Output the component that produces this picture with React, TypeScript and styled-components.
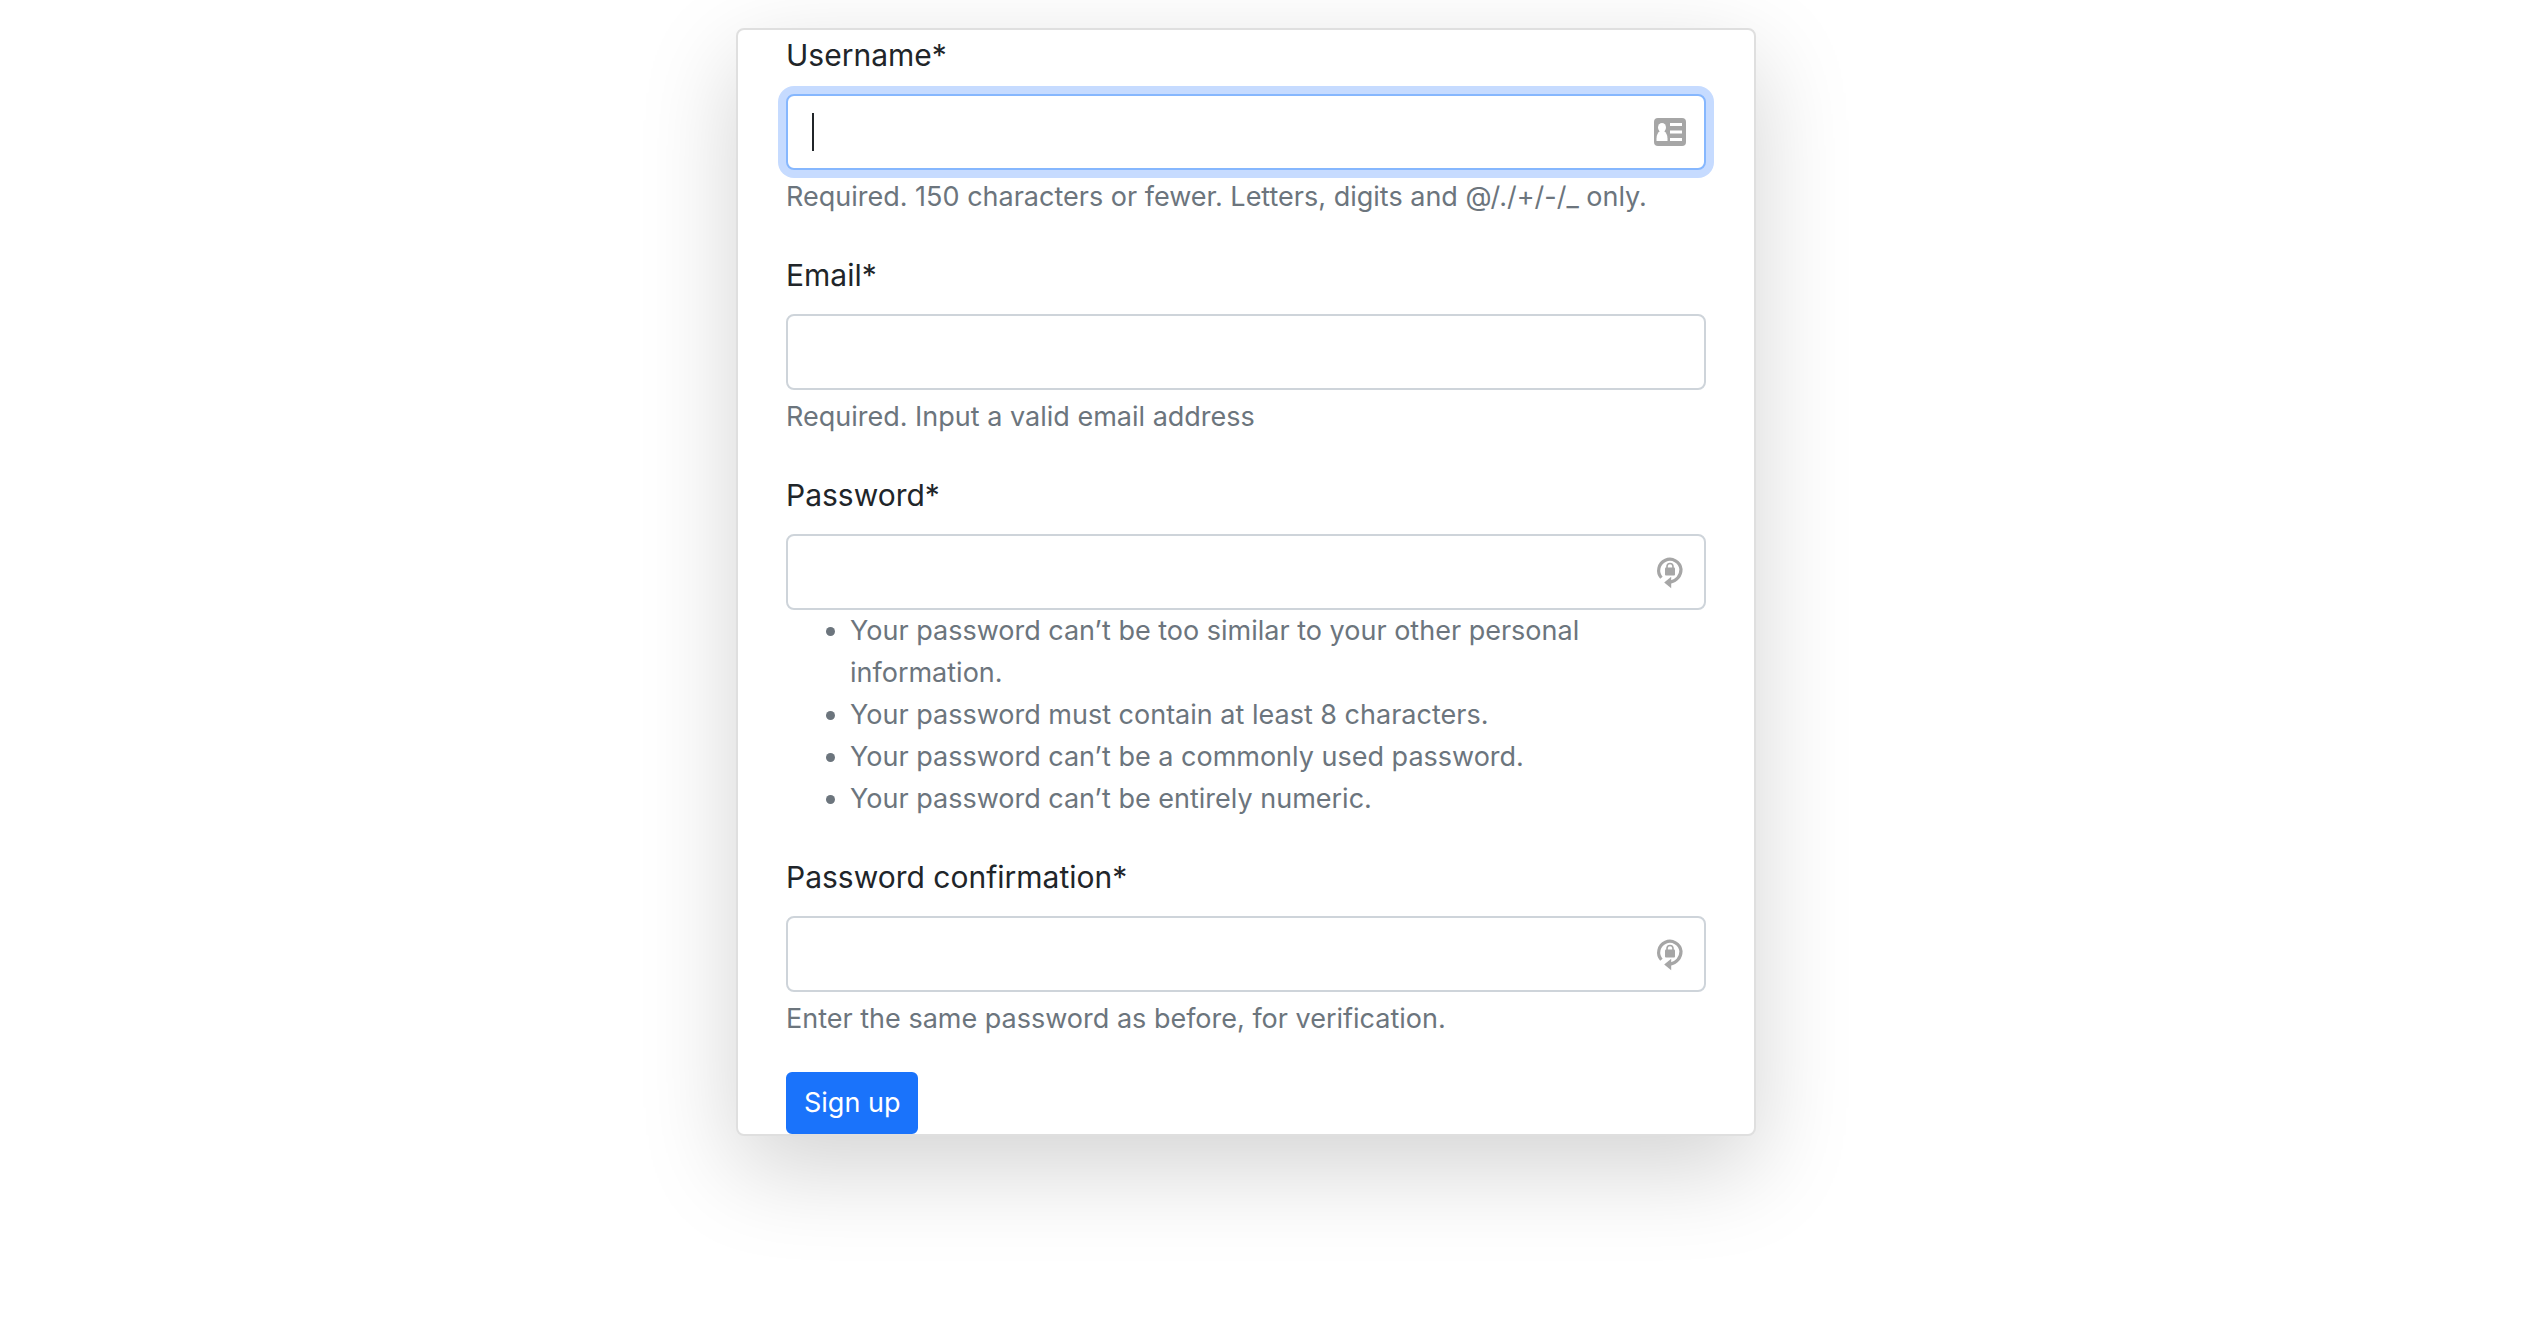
import React from "react";
import styled, { createGlobalStyle, css } from "styled-components";

const GlobalStyle = createGlobalStyle`
  *, *::before, *::after { box-sizing: border-box; }
  body {
    margin: 0;
    background: #fff;
    color: #212529;
    font-family: Inter, "Liberation Sans", sans-serif;
    font-size: 30px;
    line-height: 50px;
  }
`;

const Page = styled.main`
  display: flex;
  justify-content: center;
  padding: 28px 46px 160px 0;
`;

const Card = styled.form`
  width: 100%;
  max-width: 1020px;
  padding: 0 48px;
  background: #fff;
  border: 2px solid #dfdfdf;
  border-radius: 8px;
  box-shadow: 0 32px 96px rgba(0, 0, 0, 0.175);
`;

const Group = styled.div`
  display: flex;
  flex-direction: column;
  margin-bottom: 32px;
`;

const Label = styled.label`
  align-self: flex-start;
  margin-bottom: 14px;
`;

const Control = styled.div`
  position: relative;
  display: flex;
`;

const Input = styled.input<{ $active?: boolean }>`
  width: 100%;
  height: 76px;
  padding: 12px 80px 12px 24px;
  border: 2px solid #ced4da;
  border-radius: 8px;
  background: #fff;
  color: inherit;
  font: inherit;
  outline: none;
  caret-color: transparent;
  ${(p) =>
    p.$active &&
    css`
      border-color: #86b7fe;
      box-shadow: 0 0 0 8px #c6dbff;
    `}
`;

const Caret = styled.span`
  position: absolute;
  left: 26px;
  top: 19px;
  width: 2px;
  height: 38px;
  background: #212529;
`;

const Adornment = styled.span`
  position: absolute;
  right: 20px;
  top: 0;
  bottom: 0;
  display: flex;
  align-items: center;
  color: #a6a6a6;

  svg {
    display: block;
  }
`;

const Help = styled.small`
  margin: 8px 0 2px;
  color: #6c757d;
  font-size: 27px;
  line-height: 38px;
`;

const Rules = styled.ul`
  margin: 0;
  padding-left: 64px;
  color: #6c757d;
  font-size: 27px;
  line-height: 42px;
`;

const SubmitButton = styled.button`
  display: block;
  padding: 8px 16px;
  border: 2px solid #1a73fb;
  border-radius: 6px;
  background: #1a73fb;
  color: #fff;
  font-family: inherit;
  font-size: 27px;
  line-height: 42px;
`;

const IdCardIcon = () => (
  <svg width="32" height="28" viewBox="0 0 32 28" aria-hidden="true">
    <rect width="32" height="28" rx="4" fill="currentColor" />
    <ellipse cx="8" cy="9.5" rx="4" ry="4.5" fill="#fff" />
    <path d="M2.500 23V20.500c0-3.500 1.500-6 3.500-7.500h4c2 1.500 3.500 4 3.500 7.500V23z" fill="#fff" />
    <path d="M16 5h12v3H16zM16 12.500h12v3H16zM16 20h12v3H16z" fill="#fff" />
  </svg>
);

const LockCycleIcon = () => (
  <svg width="32" height="34" viewBox="0 0 32 34" aria-hidden="true">
    <path
      d="M7.400 22.800A11.200 11.200 0 1 1 27 14.200C27 21 22.500 26 16 27.300"
      fill="none"
      stroke="currentColor"
      strokeWidth="3.200"
    />
    <path d="M10.200 27.500L17.200 21.800V33.300z" fill="currentColor" />
    <rect x="11" y="12.500" width="10" height="8" rx="1" fill="currentColor" />
    <path
      d="M13 13V11.500a3 3 0 0 1 6 0V13"
      fill="none"
      stroke="currentColor"
      strokeWidth="1.600"
    />
  </svg>
);

type FieldProps = {
  id: string;
  label: string;
  type: string;
  active?: boolean;
  icon?: React.ReactNode;
  children: React.ReactNode;
};

const Field = ({ id, label, type, active, icon, children }: FieldProps) => (
  <Group>
    <Label htmlFor={id}>{label}*</Label>
    <Control>
      <Input id={id} name={id} type={type} $active={active} required />
      {active && <Caret />}
      {icon && <Adornment>{icon}</Adornment>}
    </Control>
    {children}
  </Group>
);

const passwordRules = [
  "Your password can’t be too similar to your other personal information.",
  "Your password must contain at least 8 characters.",
  "Your password can’t be a commonly used password.",
  "Your password can’t be entirely numeric.",
];

export default function App() {
  return (
    <>
      <GlobalStyle />
      <Page>
        <Card noValidate onSubmit={(e) => e.preventDefault()}>
          <Field id="username" label="Username" type="text" active icon={<IdCardIcon />}>
            <Help>Required. 150 characters or fewer. Letters, digits and @/./+/-/_ only.</Help>
          </Field>
          <Field id="email" label="Email" type="email">
            <Help>Required. Input a valid email address</Help>
          </Field>
          <Field id="password1" label="Password" type="password" icon={<LockCycleIcon />}>
            <Rules>
              {passwordRules.map((rule) => (
                <li key={rule}>{rule}</li>
              ))}
            </Rules>
          </Field>
          <Field
            id="password2"
            label="Password confirmation"
            type="password"
            icon={<LockCycleIcon />}
          >
            <Help>Enter the same password as before, for verification.</Help>
          </Field>
          <SubmitButton type="submit">Sign up</SubmitButton>
        </Card>
      </Page>
    </>
  );
}
